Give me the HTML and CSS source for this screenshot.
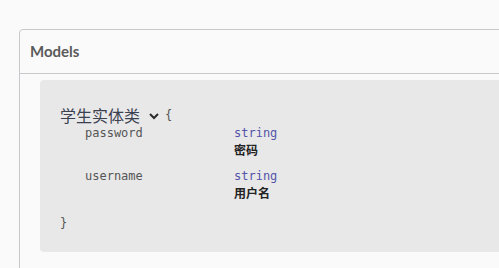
FILE: index.html
```html
<!DOCTYPE html>
<html>
   <head>
      <title>Models</title>
      <link rel="stylesheet" href="styles.css">
   </head>
   <body>
      <section class="models">
         <h4 class="models-title">Models</h4>
         <div class="model-container">
            <div class="model-head">
               <span class="model-name">学生实体类</span>
               <svg class="toggle" width="12" height="12" viewBox="0 0 12 12">
                  <path d="M2 4 L6 8 L10 4" fill="none" stroke="#2b2b2b" stroke-width="2"/>
               </svg>
               <span class="brace">{</span>
            </div>
            <table class="props">
               <tr>
                  <td class="prop-name">password</td>
                  <td class="prop-info">
                     <div class="prop-type">string</div>
                     <div class="prop-desc">密码</div>
                  </td>
               </tr>
               <tr>
                  <td class="prop-name">username</td>
                  <td class="prop-info">
                     <div class="prop-type">string</div>
                     <div class="prop-desc">用户名</div>
                  </td>
               </tr>
            </table>
            <div class="brace close">}</div>
         </div>
      </section>
   </body>
</html>
```

FILE: styles.css
```css
html, body {
   overflow: hidden;
}
body {
   margin: 0;
   background: #fafafa;
   font-family: "Noto Sans", "Noto Sans CJK SC", sans-serif;
}
.models {
   margin: 29px 0 40px 19px;
   width: 700px;
   border: 1px solid #c8c9cc;
   border-radius: 4px;
}
.models-title {
   margin: 0;
   height: 43px;
   line-height: 43px;
   padding: 0 10px;
   font-family: Lato, "Noto Sans", sans-serif;
   font-size: 15px;
   font-weight: bold;
   color: #5a5a5a;
   border-bottom: 1px solid #c8c9cc;
}
.model-container {
   margin: 6px 20px 30px;
   padding: 25px 20px 21px;
   background: #e8e8e8;
   border-radius: 4px;
}
.model-head {
   display: flex;
   align-items: center;
   height: 20px;
}
.model-name {
   font-family: "Noto Sans CJK SC", sans-serif;
   font-size: 16px;
   color: #3b4151;
}
.toggle {
   margin: 2px 5px 0 8px;
}
.brace {
   font-family: "DejaVu Sans Mono", monospace;
   font-size: 12px;
   color: #555;
}
.props {
   border-collapse: collapse;
   margin-left: 25px;
}
.props td {
   padding: 0;
   vertical-align: top;
}
.props tr + tr td {
   padding-top: 10px;
}
.prop-name {
   width: 149px;
   font-family: "DejaVu Sans Mono", monospace;
   font-size: 12px;
   line-height: 16px;
   color: #555;
}
.prop-type {
   font-family: "DejaVu Sans Mono", monospace;
   font-size: 12px;
   line-height: 16px;
   color: #55a;
}
.prop-desc {
   font-family: "Noto Sans CJK SC", sans-serif;
   font-size: 12px;
   font-weight: bold;
   line-height: 17px;
   color: #222;
}
.close {
   margin-top: 14px;
   line-height: 16px;
}
```
